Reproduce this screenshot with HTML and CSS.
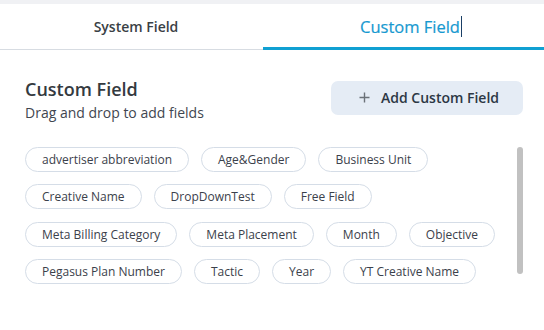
FILE: index.html
```html
<!DOCTYPE html>
<html>
<head>
<meta charset="utf-8">
<link rel="stylesheet" href="styles.css">
</head>
<body>
<div class="topbar"></div>
<div class="tabs">
  <div class="tab">System Field</div>
  <div class="tab active">Custom Field<span class="caret"></span></div>
  <div class="ink"></div>
</div>
<div class="header">
  <div class="titles">
    <div class="title">Custom Field</div>
    <div class="subtitle">Drag and drop to add fields</div>
  </div>
  <button class="add-btn">
    <svg width="11" height="11" viewBox="0 0 11 11"><path d="M5.5 0.5v10M0.5 5.5h10" stroke="#6b7178" stroke-width="1.4" fill="none"/></svg>
    <span>Add Custom Field</span>
  </button>
</div>
<div class="body">
  <div class="chips">
    <span class="chip">advertiser abbreviation</span>
    <span class="chip">Age&amp;Gender</span>
    <span class="chip">Business Unit</span>
    <span class="chip">Creative Name</span>
    <span class="chip">DropDownTest</span>
    <span class="chip">Free Field</span>
    <span class="chip">Meta Billing Category</span>
    <span class="chip">Meta Placement</span>
    <span class="chip">Month</span>
    <span class="chip">Objective</span>
    <span class="chip">Pegasus Plan Number</span>
    <span class="chip">Tactic</span>
    <span class="chip">Year</span>
    <span class="chip">YT Creative Name</span>
  </div>
  <div class="scroll-track"><div class="scroll-thumb"></div></div>
</div>
</body>
</html>
```

FILE: styles.css
```css
* { box-sizing: border-box; }
html, body {
  margin: 0;
  padding: 0;
  background: #ffffff;
  font-family: "Open Sans", "Noto Sans", sans-serif;
  color: #343a40;
}
.topbar {
  height: 4px;
  background: #f0f1f4;
}
.tabs {
  position: relative;
  display: grid;
  grid-template-columns: 1fr 1fr;
  height: 46px;
  border-bottom: 1px solid #d7dce2;
}
.tab {
  display: flex;
  align-items: center;
  justify-content: center;
  font-size: 14px;
  font-weight: 600;
  color: #3a3f45;
  padding-bottom: 1px;
}
.tab.active {
  font-size: 16.5px;
  font-weight: 400;
  color: #1799d0;
  -webkit-text-stroke: 0.2px #1799d0;
  padding-left: 6px;
}
.caret {
  display: inline-block;
  width: 1px;
  height: 21px;
  background: #1a3f66;
  margin-left: 1px;
}
.ink {
  position: absolute;
  left: 263px;
  right: 0;
  bottom: -1px;
  height: 3px;
  background: #10a0d2;
}
.header {
  display: flex;
  align-items: center;
  justify-content: space-between;
  padding: 27px 21px 0 25px;
}
.title {
  font-size: 18px;
  line-height: 24px;
  font-weight: 600;
  color: #343a40;
}
.subtitle {
  margin-top: 2px;
  font-size: 14px;
  line-height: 20px;
  color: #3f4650;
}
.add-btn {
  display: flex;
  align-items: center;
  gap: 11px;
  width: 192px;
  height: 34px;
  margin-top: -5px;
  padding: 0 0 0 28px;
  border: none;
  border-radius: 7px;
  background: #e5ecf5;
  font-family: inherit;
  font-size: 14px;
  font-weight: 600;
  color: #2c3744;
}
.body {
  display: flex;
  align-items: flex-start;
  padding: 24px 21px 0 25px;
}
.chips {
  flex: 1;
  display: flex;
  flex-wrap: wrap;
  column-gap: 12px;
  row-gap: 12.4px;
}
.chip {
  display: inline-flex;
  align-items: center;
  height: 25px;
  padding: 0 16px;
  border: 1px solid #d5dde7;
  border-radius: 13px;
  font-size: 12px;
  color: #3b414b;
  white-space: nowrap;
}
.scroll-track {
  width: 6px;
  margin-left: 12px;
}
.scroll-thumb {
  height: 127px;
  border-radius: 3px;
  background: #c1c1c1;
}
```
